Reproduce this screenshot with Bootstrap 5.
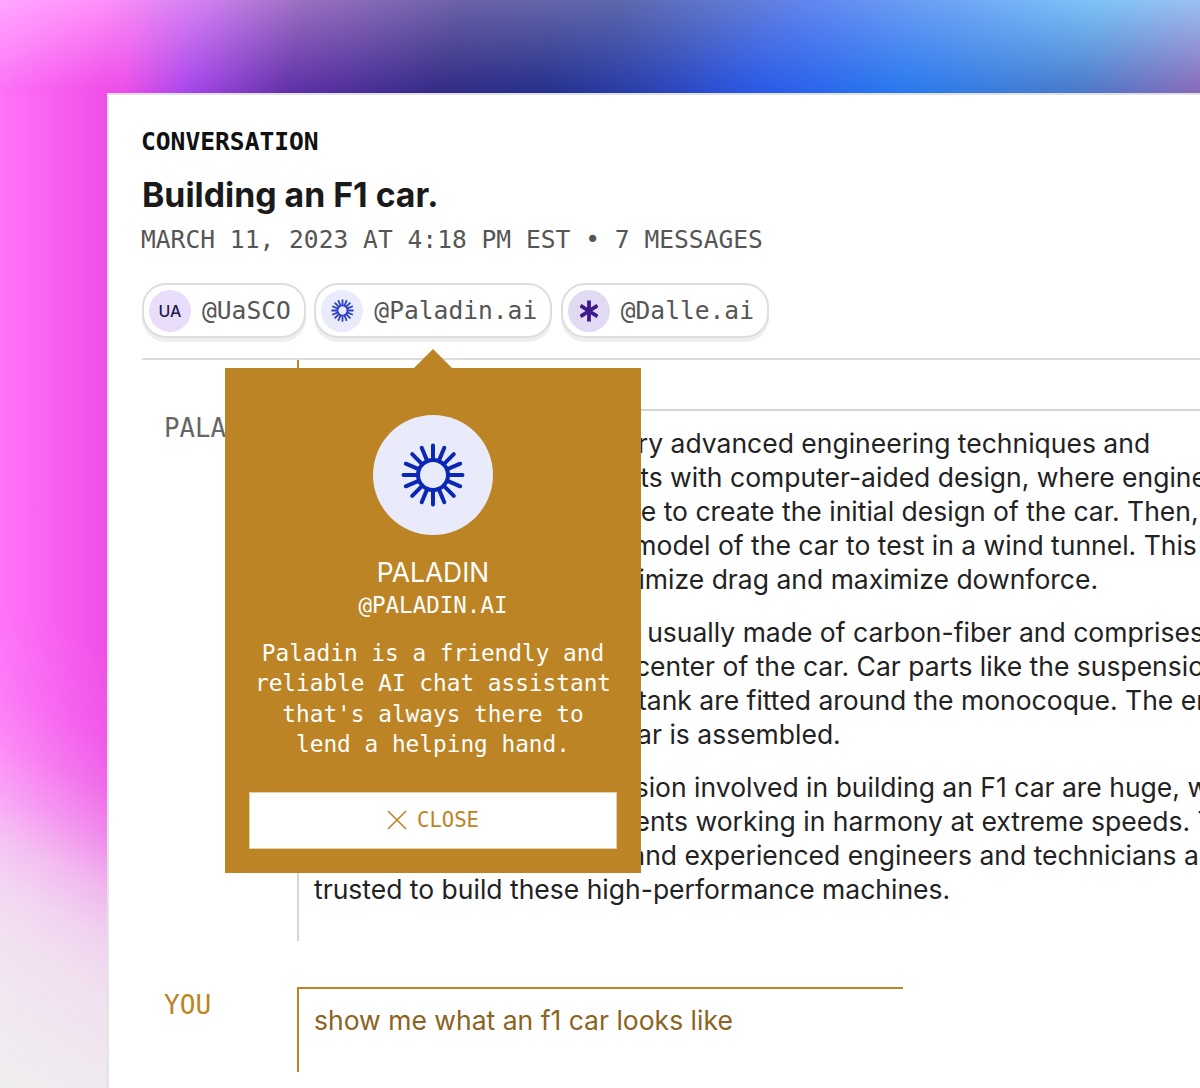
<!DOCTYPE html>
<html lang="en">
<head>
<meta charset="utf-8">
<title>Conversation</title>
<link href="https://cdn.jsdelivr.net/npm/bootstrap@5.3.0/dist/css/bootstrap.min.css" rel="stylesheet">
<style>
html, body { height: 1088px; overflow: hidden; }
body {
  padding: 0;
  font-family: Inter, "Liberation Sans", sans-serif;
  background-color: #f0eef0;
  background-image:
    linear-gradient(205deg, rgba(240,238,240,0) 1050px, rgba(240,238,240,.06) 1130px, rgba(240,238,240,.18) 1178px, rgba(240,238,240,.38) 1222px, rgba(240,238,240,.65) 1268px, rgba(240,238,240,.82) 1313px, rgba(240,238,240,.9) 1359px, #f0eef0 1493px),
    linear-gradient(90deg, #ff74f8 0, #f04ee8 108px);
  background-repeat: no-repeat;
}
.sky { position: relative; height: 93px; background: linear-gradient(100deg, #ff74f8 8px, #f04ee8 114px, #ee4ee8 135px, #a846ec 200px, #6030a8 300px, #322b85 450px, #25308a 550px, #2a40b0 650px, #2a58e8 760px, #2878f0 900px, #3a7cdc 1000px, #4a78c8 1080px, #8a68b8 1200px); }
.sky::after { content: ""; position: absolute; inset: 0; background: linear-gradient(100deg, #ffa8ff 0, #ff90fa 100px, #d080f0 200px, #9a70c0 300px, #6a62a8 460px, #5e68ac 612px, #6388f0 805px, #70a8f5 950px, #7cc4f8 1072px, #a0c0f0 1195px); -webkit-mask-image: linear-gradient(180deg, #000 0, transparent 100%); mask-image: linear-gradient(180deg, #000 0, transparent 100%); }
.sheet { position: relative; margin-left: 107px; width: 1300px; height: 995px; background: #fff; border-top: 2px solid #e2e2e2; border-left: 2px solid #e4e4e4; padding: 32px 0 0 33px; overflow: hidden; }
.mono { font-family: "DejaVu Sans Mono", "Liberation Mono", monospace; }
.eyebrow { font-size: 24.6px; font-weight: 700; line-height: 30px; color: #111; margin-left: -1px; }
.headline { font-size: 33.8px; font-weight: 700; line-height: 42px; color: #1a1a1a; margin: 17px 0 0; }
.stamp { font-size: 24.6px; line-height: 30px; color: #555; margin: 9px 0 0 -1px; }
.chip-row { margin-top: 28px; height: 57px; gap: 8.5px; }
.chip { height: 55px; padding: 0 13px 0 5px; background: #fff; border: 2px solid #dedede; border-radius: 24px; box-shadow: 0 4px 0 #eeeeee; font-size: 24.6px; color: #555; gap: 11px; }
.chip-tx { padding-top: 2px; }
.chip-av { width: 42px; height: 42px; border-radius: 50%; flex: none; }
.av-ua { background: #e8defb; color: #1c1c50; font: 500 16px Inter, sans-serif; }
.av-pal { background: #e9ebfa; }
.av-dal { background: #e2d9f3; }
.rule { border-top: 2px solid #dcdcdc; margin-top: 18px; }
.msg-row { display: flex; }
.you-row { margin-top: 46px; }
.who { width: 155px; flex: none; padding: 2px 0 0 22px; font-size: 25.7px; line-height: 34px; color: #666; }
.who-you { color: #bc8424; font-size: 26.2px; padding-top: 1px; }
.prev-bubble { height: 49px; border-left: 2px solid #bc8424; width: 100%; }
.bubble { border-left: 2px solid #d6d6d6; border-top: 2px solid #d6d6d6; padding: 15px 16px 0 15px; height: 532px; flex: 1; font-size: 26.5px; line-height: 34px; color: #222; white-space: nowrap; }
.bubble p { margin: 0 0 19px; }
.you-bubble { border-left: 2px solid #bc8424; border-top: 2px solid #bc8424; padding: 14px 15px 0; width: 606px; height: 85px; font-size: 26.5px; line-height: 34px; color: #8b6420; white-space: nowrap; }
.pop { position: absolute; left: 116px; top: 273px; width: 416px; height: 505px; background: #bc8424; color: #fff; padding-top: 47px; text-align: center; }
.pop::before { content: ""; position: absolute; left: 189px; top: -19px; border-left: 19px solid transparent; border-right: 19px solid transparent; border-bottom: 19px solid #bc8424; }
.pop-av { width: 120px; height: 120px; border-radius: 50%; background: #e9ebfa; margin: 0 auto; }
.pop-name { font-size: 26.4px; line-height: 34px; margin-top: 20px; }
.pop-handle { font-size: 22.5px; font-weight: 500; line-height: 30px; margin-top: 1px; }
.pop-bio { font-size: 22.75px; line-height: 30.4px; margin-top: 18px; }
.pop-close { width: 368px; height: 57px; margin: 32px auto 0; background: #fff; border: 1px solid #e3cfa8; border-radius: 0; color: #bc8424; font-size: 20.6px; gap: 10px; }
.pop-close:hover, .pop-close:active { background: #fff !important; color: #bc8424 !important; border-color: #e3cfa8 !important; }
</style>
</head>
<body>
<div class="sky"></div>
<main class="sheet">
  <div class="mono eyebrow">CONVERSATION</div>
  <h1 class="headline">Building an F1 car.</h1>
  <div class="mono stamp">MARCH 11, 2023 AT 4:18 PM EST • 7 MESSAGES</div>
  <div class="d-flex chip-row">
    <div class="chip mono d-flex align-items-center"><span class="chip-av av-ua d-flex align-items-center justify-content-center">UA</span><span class="chip-tx">@UaSCO</span></div>
    <div class="chip mono d-flex align-items-center"><span class="chip-av av-pal d-flex align-items-center justify-content-center">
      <svg width="23" height="23" viewBox="-32 -32 64 64" fill="none" stroke="#2a3fc4" stroke-width="5" stroke-linecap="round"><circle r="14"/><path d="M15 0H29M-15 0H-29M0 15V29M0-15V-29M13.9 5.7L26.8 11.1M-13.9-5.7L-26.8-11.1M13.9-5.7L26.8-11.1M-13.9 5.7L-26.8 11.1M5.7 13.9L11.1 26.8M-5.7-13.9L-11.1-26.8M5.7-13.9L11.1-26.8M-5.7 13.9L-11.1 26.8M10.6 10.6L20.5 20.5M-10.6-10.6L-20.5-20.5M10.6-10.6L20.5-20.5M-10.6 10.6L-20.5 20.5"/></svg></span><span class="chip-tx">@Paladin.ai</span></div>
    <div class="chip mono d-flex align-items-center"><span class="chip-av av-dal d-flex align-items-center justify-content-center">
      <svg width="18" height="22" viewBox="-9 -11 18 22" fill="none" stroke="#3f1a8c" stroke-width="3.8"><path d="M0-10.5V10.5M-8.5-5.5L8.5 5.5M-8.5 5.5L8.5-5.5"/></svg></span><span class="chip-tx">@Dalle.ai</span></div>
  </div>
  <div class="rule"></div>
  <div class="msg-row"><div class="who"></div><div class="prev-bubble"></div></div>
  <div class="msg-row">
    <div class="who mono">PALADIN</div>
    <div class="bubble">
      <p>Building an F1 car uses very advanced engineering techniques and<br>
      That building process starts with computer-aided design, where engineers use<br>
      advanced graphic software to create the initial design of the car. Then,<br>
      they build a small-scaled model of the car to test in a wind tunnel. This helps<br>
      their aerodynamics to minimize drag and maximize downforce.</p>
      <p>The main unit of the car is usually made of carbon-fiber and comprises<br>
      on the monocoque at the center of the car. Car parts like the suspension<br>
      drive system and the fuel tank are fitted around the monocoque. The engine<br>
      is then located once the car is assembled.</p>
      <p>The higher cost and precision involved in building an F1 car are huge, with<br>
      the thousands of components working in harmony at extreme speeds. Thus,<br>
      only the most committed and experienced engineers and technicians are<br>
      trusted to build these high-performance machines.</p>
    </div>
  </div>
  <div class="msg-row you-row">
    <div class="who who-you mono">YOU</div>
    <div class="you-bubble">show me what an f1 car looks like</div>
  </div>

  <aside class="pop">
    <div class="pop-av d-flex align-items-center justify-content-center">
      <svg width="64" height="64" viewBox="-32 -32 64 64" fill="none" stroke="#0a28b4" stroke-width="4" stroke-linecap="round"><circle r="15"/><path d="M15 0H29.5M-15 0H-29.5M0 15V29.5M0-15V-29.5M13.9 5.7L27.2 11.3M-13.9-5.7L-27.2-11.3M13.9-5.7L27.2-11.3M-13.9 5.7L-27.2 11.3M5.7 13.9L11.3 27.2M-5.7-13.9L-11.3-27.2M5.7-13.9L11.3-27.2M-5.7 13.9L-11.3 27.2M10.6 10.6L20.8 20.8M-10.6-10.6L-20.8-20.8M10.6-10.6L20.8-20.8M-10.6 10.6L-20.8 20.8"/></svg>
    </div>
    <div class="pop-name">PALADIN</div>
    <div class="pop-handle mono">@PALADIN.AI</div>
    <div class="pop-bio mono">Paladin is a friendly and<br>reliable AI chat assistant<br>that's always there to<br>lend a helping hand.</div>
    <button type="button" class="btn pop-close mono d-flex align-items-center justify-content-center">
      <svg width="20" height="20" viewBox="0 0 20 20" fill="none" stroke="#bc8424" stroke-width="1.6"><path d="M1 1L19 19M19 1L1 19"/></svg><span>CLOSE</span>
    </button>
  </aside>
</main>
<script src="https://cdn.jsdelivr.net/npm/bootstrap@5.3.0/dist/js/bootstrap.bundle.min.js"></script>
</body>
</html>
